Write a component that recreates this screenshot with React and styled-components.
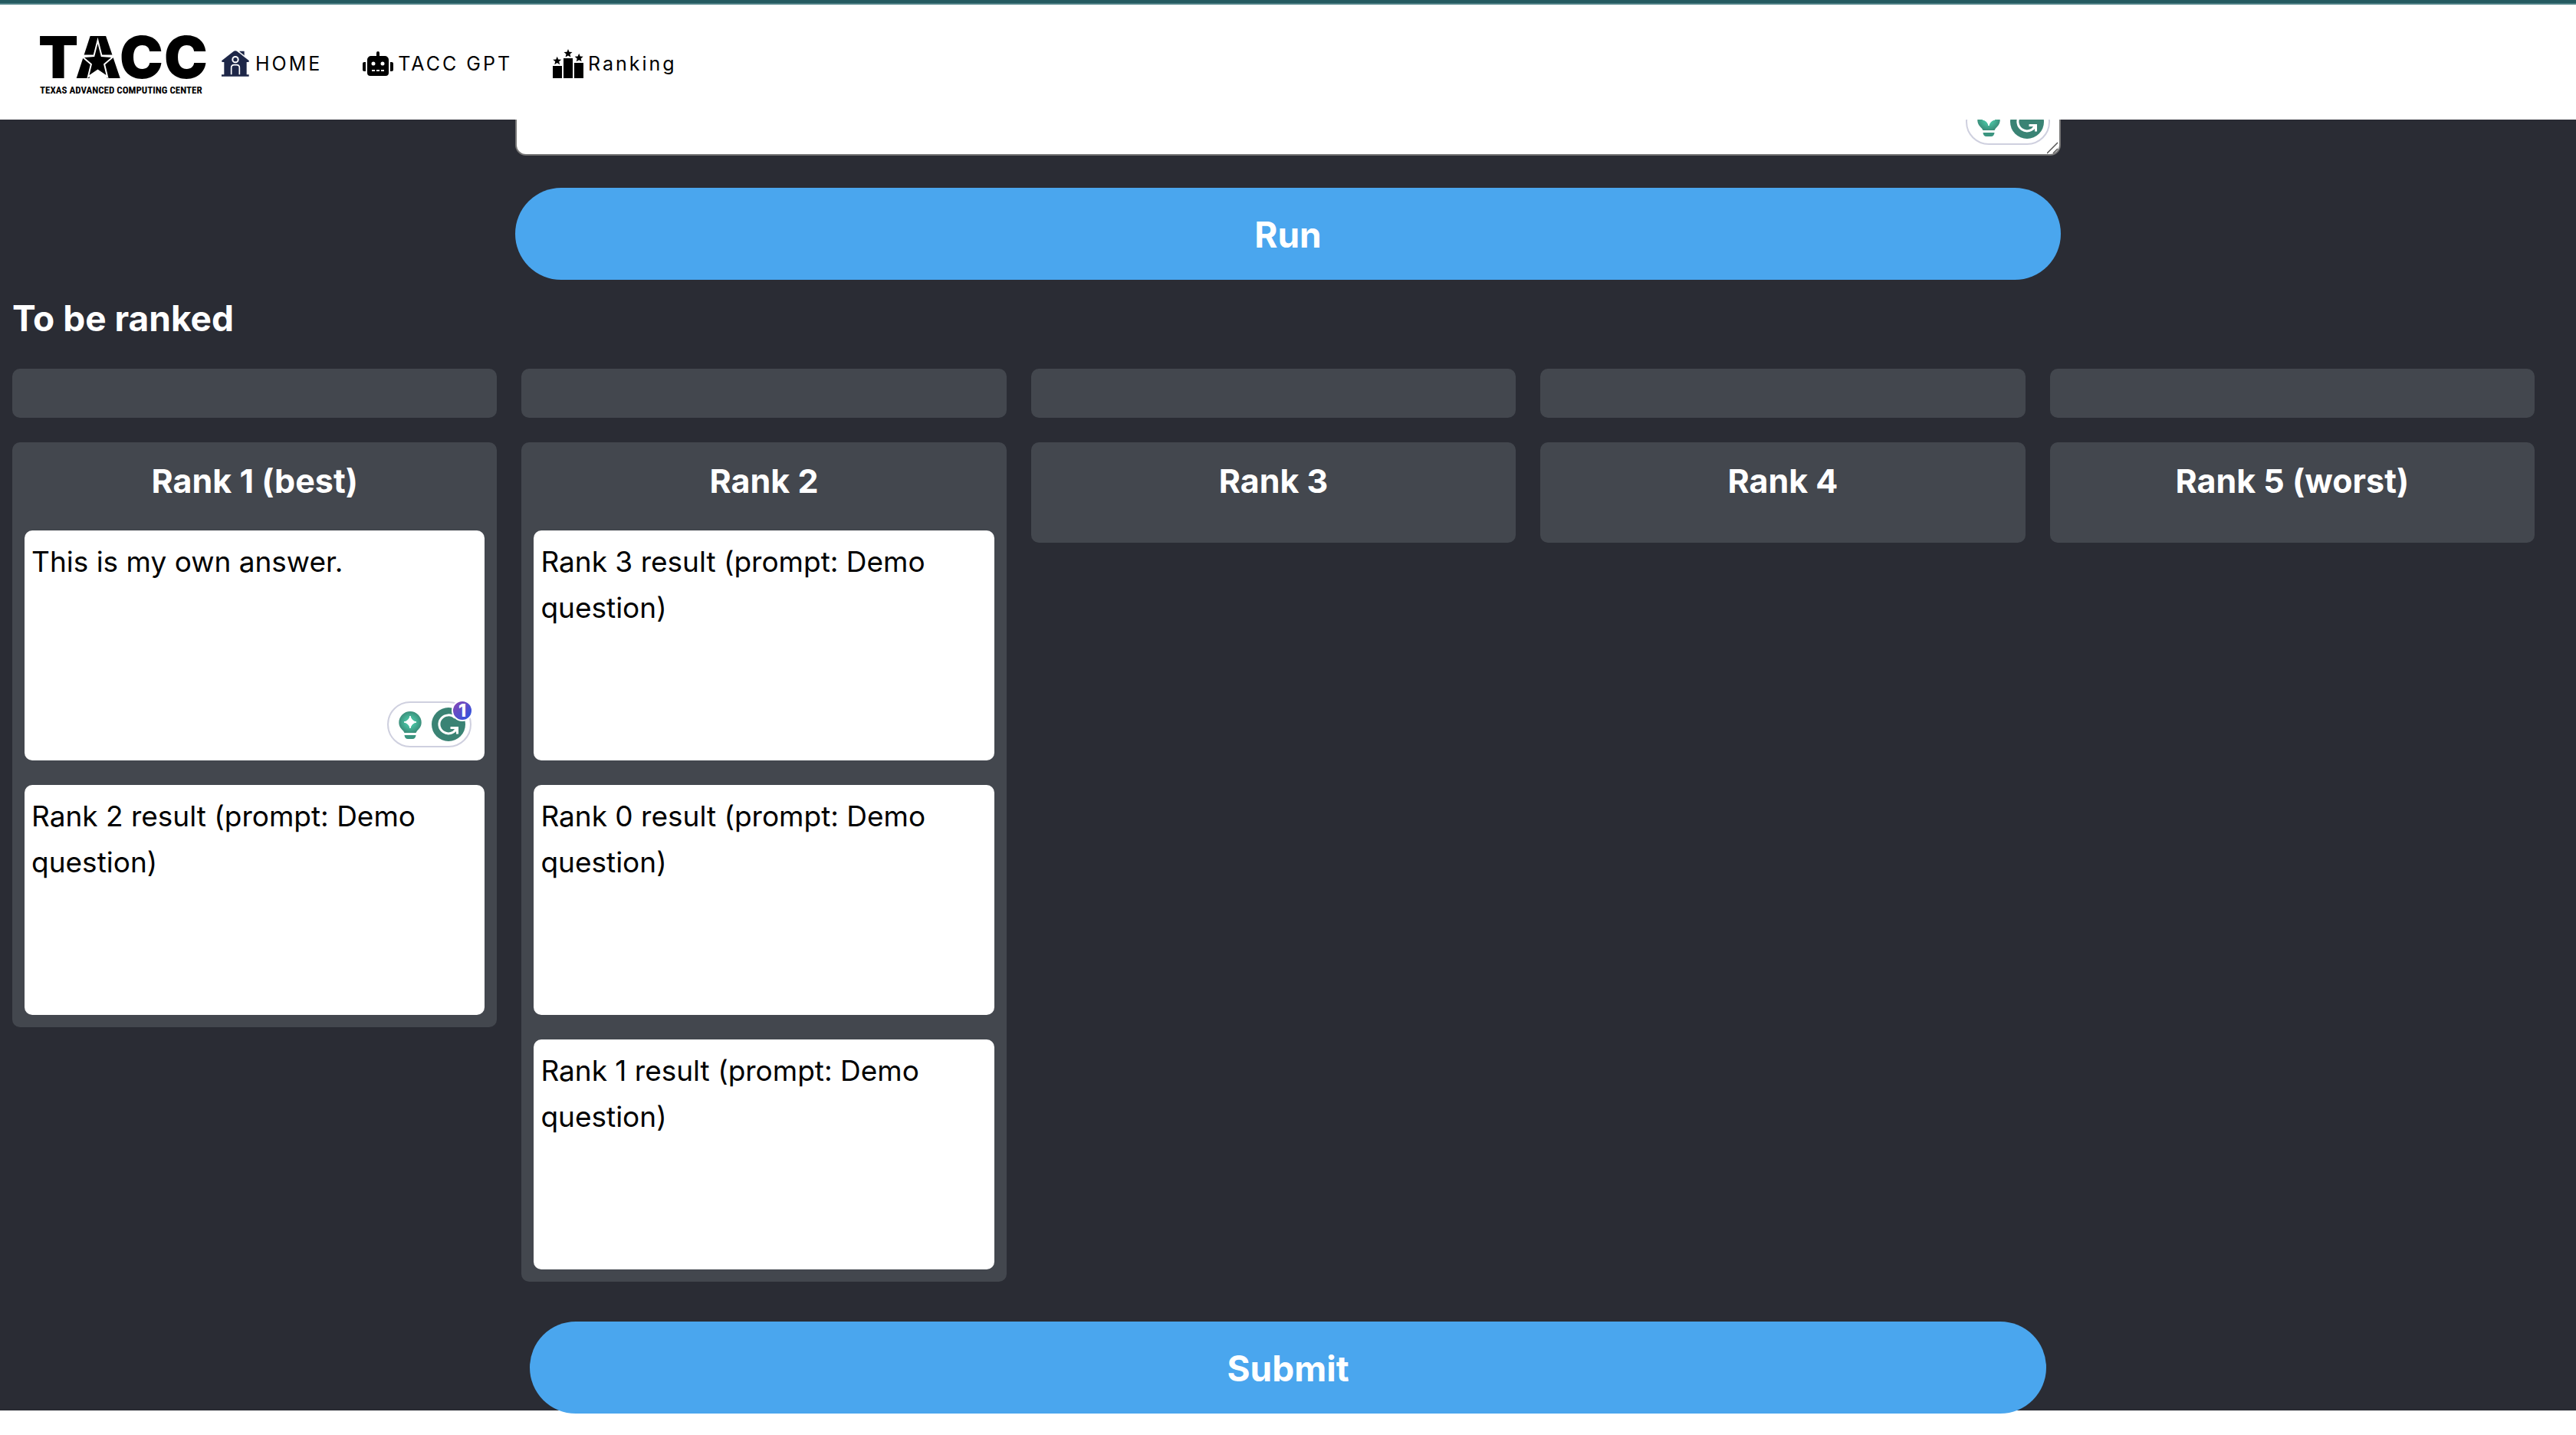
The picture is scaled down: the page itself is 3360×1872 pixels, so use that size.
import React from "react";
import styled, { createGlobalStyle } from "styled-components";
import { FaRobot } from "react-icons/fa";

const GlobalStyle = createGlobalStyle`
  *, *::before, *::after { box-sizing: border-box; }
  body {
    margin: 0;
    background: #ffffff;
    color: #000000;
    font-family: Inter, "Liberation Sans", sans-serif;
  }
`;

const Page = styled.div`
  min-height: 100vh;
  padding-bottom: 32px;
  background: #ffffff;
`;

const Header = styled.header`
  display: flex;
  align-items: center;
  height: 156px;
  padding: 6px 52px 0;
  background: #ffffff;
  border-top: 4px solid #245a60;
  box-shadow: inset 0 2px 0 #4d7f85;
`;

const LogoArt = styled.svg`
  flex: none;
  overflow: visible;
`;

const Nav = styled.nav`
  display: flex;
  align-items: center;
  gap: 53px;
  margin-left: 20px;
`;

const NavLink = styled.a`
  display: flex;
  align-items: center;
  gap: ${(p) => p.$gap}px;
  color: #000000;
  font-size: 25px;
  line-height: 40px;
  letter-spacing: 3px;
  text-decoration: none;

  svg { display: block; flex: none; }
`;

const RobotIcon = styled(FaRobot)`
  width: 40px;
  height: 32px;
`;

const Main = styled.main`
  display: flex;
  flex-direction: column;
  align-items: center;
  background: #2a2c34;
`;

const PromptClip = styled.section`
  display: flex;
  flex-direction: column;
  justify-content: flex-end;
  width: 60%;
  height: 47px;
  overflow: hidden;
`;

const Field = styled.div`
  position: relative;
  display: flex;
`;

const PromptInput = styled.textarea`
  width: 100%;
  height: 200px;
  flex: none;
  padding: 10px;
  border: 2px solid #767676;
  border-radius: 14px;
  background: #ffffff;
  font: inherit;
  font-size: 37px;
  line-height: 60px;
  resize: none;
`;

const Grip = styled.svg`
  position: absolute;
  right: 2px;
  bottom: 2px;
`;

const Assist = styled.svg`
  position: absolute;
  right: ${(p) => p.$inset}px;
  bottom: ${(p) => p.$inset}px;
  overflow: visible;
`;

const ActionButton = styled.button`
  position: relative;
  width: 60%;
  height: 120px;
  padding: 2px 0 0;
  border: 0;
  border-radius: 60px;
  background: #4aa6ee;
  color: #ffffff;
  font: inherit;
  font-size: 46px;
  font-weight: 700;
  line-height: 72px;
`;

const RunButton = styled(ActionButton)`
  margin-top: 42px;
`;

const Section = styled.section`
  width: 100%;
  padding: 14px 54px 0 16px;
`;

const SectionTitle = styled.h2`
  margin: 0 0 30px;
  color: #ffffff;
  font-size: 46px;
  font-weight: 700;
  line-height: 72px;
`;

const Columns = styled.div`
  display: grid;
  grid-template-columns: repeat(5, minmax(0, 1fr));
  align-items: start;
  gap: 32px;
`;

const Slot = styled.div`
  height: 64px;
  border-radius: 10px;
  background: #43474e;
`;

const Column = styled.section`
  display: flex;
  flex-direction: column;
  padding: 16px;
  border-radius: 10px;
  background: #43474e;
`;

const ColumnTitle = styled.h3`
  margin: 0 0 31px;
  color: #ffffff;
  font-size: 43px;
  font-weight: 700;
  line-height: 68px;
  text-align: center;
`;

const CardList = styled.div`
  display: flex;
  flex-direction: column;
  gap: 32px;
`;

const Card = styled.textarea`
  display: block;
  width: 100%;
  height: 300px;
  padding: 11px 9px;
  border: 0;
  border-radius: 10px;
  background: #ffffff;
  color: #000000;
  font: inherit;
  font-size: 37px;
  line-height: 60px;
  resize: none;
`;

const SubmitRow = styled.div`
  display: flex;
  justify-content: center;
  width: 100%;
  margin: 52px 0 -4px;
  padding: 0 32px;
`;

function starPoints(cx, cy, r, ratio = 0.45) {
  return Array.from({ length: 10 }, (_, i) => {
    const radius = i % 2 ? r * ratio : r;
    const a = -Math.PI / 2 + (i * Math.PI) / 5;
    return `${(cx + radius * Math.cos(a)).toFixed(2)},${(cy + radius * Math.sin(a)).toFixed(2)}`;
  }).join(" ");
}

function Logo() {
  return (
    <LogoArt width="217" height="80" viewBox="0 0 217 80" role="img" aria-label="TACC">
      <g fontFamily="Inter, sans-serif" fontWeight="900" fontSize="76">
        <text x="-2" y="59">T</text>
        <text x="46" y="59">A</text>
        <text x="104" y="59">C</text>
        <text x="162" y="59">C</text>
      </g>
      <rect x="66" y="12" width="19" height="24" />
      <path d="M53 29.500H98" stroke="#fff" strokeWidth="2" />
      <polygon
        points="75.500,14 79.800,31 93,32 83,40.500 86.500,55 75.500,47.500 64.500,55 68,40.500 58,32 71.200,31"
        stroke="#fff"
        strokeWidth="4"
        strokeMiterlimit="10"
        paintOrder="stroke"
      />
      <text x="0" y="79" fontFamily="'Liberation Sans Narrow', 'Roboto Condensed', sans-serif" fontWeight="700" fontSize="13">
        TEXAS ADVANCED COMPUTING CENTER
      </text>
    </LogoArt>
  );
}

function HouseIcon() {
  return (
    <svg width="36" height="34" viewBox="0 0 108 100" fill="#1e2748">
      <path d="M70 1H89V22L70 8Z" />
      <path d="M46 3Q54 -3 62 3L107 38Q109 44 103 44H98V93H107V100H0V93H10V44H5Q-1 44 1 38Z" />
      <path d="M66 2L92 23" stroke="#fff" strokeWidth="4" />
      <circle cx="54" cy="34" r="11" fill="none" stroke="#fff" strokeWidth="6" />
      <path d="M38 93V66Q38 55 49 55H59Q70 55 70 66V93" fill="none" stroke="#fff" strokeWidth="5" />
    </svg>
  );
}

function PodiumIcon() {
  return (
    <svg width="40" height="38" viewBox="0 0 40 38">
      <path d="M0 22H12V38H0ZM14 12H26V38H14ZM28 18H40V38H28Z" />
      <polygon points={starPoints(5.700, 15.500, 5.800)} />
      <polygon points={starPoints(20, 5.800, 5.800)} />
      <polygon points={starPoints(34.200, 11.600, 5.800)} />
    </svg>
  );
}

function AssistWidget({ id, inset, count }) {
  return (
    <Assist $inset={inset} width="110" height="60" viewBox="0 0 110 60" aria-hidden="true">
      <defs>
        <radialGradient id={`${id}-bulb`}>
          <stop offset="0.3" stopColor="#4bc4a4" />
          <stop offset="1" stopColor="#3b8f7b" />
        </radialGradient>
        <linearGradient id={`${id}-badge`} x1="0" y1="0" x2="1" y2="1">
          <stop offset="0.1" stopColor="#8547b5" />
          <stop offset="0.9" stopColor="#2c55e0" />
        </linearGradient>
      </defs>
      <rect x="1" y="1" width="108" height="58" rx="29" fill="#fff" stroke="#cfd0df" strokeWidth="2" />
      <path
        d="M30 13A14.700 14.700 0 0 1 44.700 27.500C44.700 33 41.500 36 39 38.500L37.500 41H22.500L21 38.500C18.500 36 15.300 33 15.300 27.500A14.700 14.700 0 0 1 30 13Z"
        fill={`url(#${id}-bulb)`}
      />
      <path d="M30 19Q31.500 25.500 38 27Q31.500 28.500 30 35Q28.500 28.500 22 27Q28.500 25.500 30 19Z" fill="#fff" stroke="#fff" strokeLinejoin="round" />
      <path d="M22.500 44H37.500Q37 49 33 49H27Q23 49 22.500 44Z" fill="#3b9580" />
      <circle cx="80" cy="30" r="22" fill="#3a8374" />
      <path d="M88.500 21.500A12 12 0 1 0 90.500 35.500" fill="none" stroke="#fff" strokeWidth="3" />
      <path d="M82.500 34.500H91.500V42.500M91 35L87 39.500" fill="none" stroke="#fff" strokeWidth="3" />
      {count && (
        <>
          <circle cx="98" cy="12" r="13" fill={`url(#${id}-badge)`} stroke="#fff" strokeWidth="2" />
          <text x="98" y="20" fill="#fff" fontFamily="Inter, sans-serif" fontSize="23" fontWeight="800" textAnchor="middle">
            {count}
          </text>
        </>
      )}
    </Assist>
  );
}

const columns = [
  { title: "Rank 1 (best)", cards: ["This is my own answer.", "Rank 2 result (prompt: Demo question)"] },
  {
    title: "Rank 2",
    cards: [
      "Rank 3 result (prompt: Demo question)",
      "Rank 0 result (prompt: Demo question)",
      "Rank 1 result (prompt: Demo question)",
    ],
  },
  { title: "Rank 3", cards: [] },
  { title: "Rank 4", cards: [] },
  { title: "Rank 5 (worst)", cards: [] },
];

export default function App() {
  return (
    <Page>
      <GlobalStyle />
      <Header>
        <Logo />
        <Nav>
          <NavLink href="#home" $gap={8}>
            <HouseIcon />
            HOME
          </NavLink>
          <NavLink href="#gpt" $gap={6}>
            <RobotIcon />
            TACC GPT
          </NavLink>
          <NavLink href="#ranking" $gap={6}>
            <PodiumIcon />
            Ranking
          </NavLink>
        </Nav>
      </Header>
      <Main>
        <PromptClip>
          <Field>
            <PromptInput aria-label="Prompt" />
            <AssistWidget id="prompt" inset={14} />
            <Grip width="16" height="16" viewBox="0 0 16 16" fill="none" stroke="#555" strokeWidth="1.5">
              <path d="M0 15L14 1M8 15L14 9" />
            </Grip>
          </Field>
        </PromptClip>
        <RunButton type="button">Run</RunButton>
        <Section>
          <SectionTitle>To be ranked</SectionTitle>
          <Columns>
            {columns.map((c) => (
              <Slot key={c.title} />
            ))}
            {columns.map((c) => (
              <Column key={c.title}>
                <ColumnTitle>{c.title}</ColumnTitle>
                <CardList>
                  {c.cards.map((text, i) => (
                    <Field key={text}>
                      <Card aria-label={`${c.title}, answer ${i + 1}`} defaultValue={text} />
                      {text.startsWith("This") && <AssistWidget id="answer" inset={17} count="1" />}
                    </Field>
                  ))}
                </CardList>
              </Column>
            ))}
          </Columns>
        </Section>
        <SubmitRow>
          <ActionButton type="submit">Submit</ActionButton>
        </SubmitRow>
      </Main>
    </Page>
  );
}
